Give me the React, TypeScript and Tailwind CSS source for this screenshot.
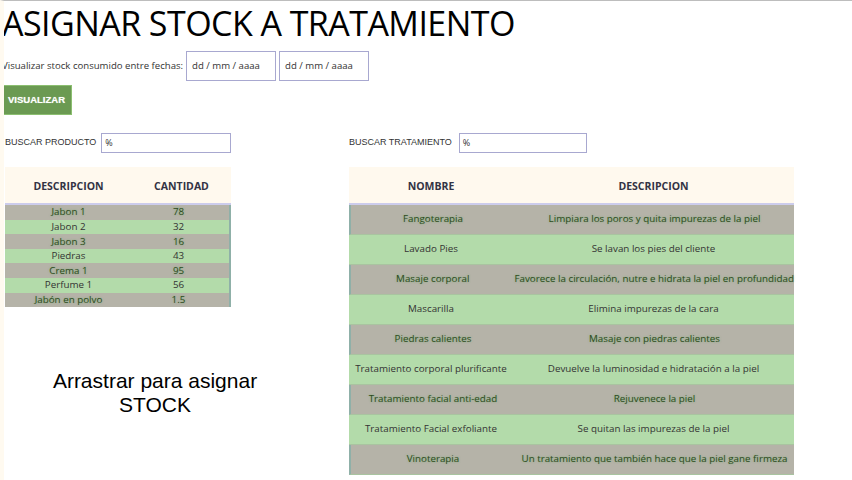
import React from "react";

/*
| Asignar stock a tratamiento
*/
const productos = [
    {desc: "Jabon 1", cant: "78"},
    {desc: "Jabon 2", cant: "32"},
    {desc: "Jabon 3", cant: "16"},
    {desc: "Piedras", cant: "43"},
    {desc: "Crema 1", cant: "95"},
    {desc: "Perfume 1", cant: "56"},
    {desc: "Jabón en polvo", cant: "1.5"},
];

const tratamientos = [
    {nombre: "Fangoterapia", desc: "Limpiara los poros y quita impurezas de la piel"},
    {nombre: "Lavado Pies", desc: "Se lavan los pies del cliente"},
    {nombre: "Masaje corporal", desc: "Favorece la circulación, nutre e hidrata la piel en profundidad"},
    {nombre: "Mascarilla", desc: "Elimina impurezas de la cara"},
    {nombre: "Piedras calientes", desc: "Masaje con piedras calientes"},
    {nombre: "Tratamiento corporal plurificante", desc: "Devuelve la luminosidad e hidratación a la piel"},
    {nombre: "Tratamiento facial anti-edad", desc: "Rejuvenece la piel"},
    {nombre: "Tratamiento Facial exfoliante", desc: "Se quitan las impurezas de la piel"},
    {nombre: "Vinoterapia", desc: "Un tratamiento que también hace que la piel gane firmeza"},
];

const sans = "font-['Open_Sans',sans-serif]";
const arial = "font-['Liberation_Sans',Arial,sans-serif]";

function rowClass(i: number) {
    return i % 2 === 0
        ? "bg-[#b5b3a8] text-[#2f4a1e] [text-shadow:0_0_2px_rgba(90,170,90,0.7)]"
        : "bg-[#b3dbaa] text-[#333]";
}

export default function App() {
    return (
        <div className={`w-[852px] h-[480px] overflow-hidden bg-white border-t border-[#bdbdbd] border-l-[4px] border-l-[#fffaf0] ${sans}`}>

            {/* TITLE */}
            <h1 className="text-[34px] leading-[42px] text-black -ml-[2px] mt-[1px] tracking-[-0.55px] whitespace-nowrap">
                ASIGNAR STOCK A TRATAMIENTO
            </h1>

            {/* FECHAS */}
            <div className="flex items-center -ml-[2px] mt-[7px]">
                <span className="text-[9.6px] text-[#333] whitespace-nowrap">Visualizar stock consumido entre fechas:</span>
                <div className="ml-[3px] w-[90px] h-[30px] border border-[#a8a8d0] flex items-center pl-[5px] text-[9.6px] text-[#333]">
                    dd / mm / aaaa
                </div>
                <div className="ml-[3px] w-[90px] h-[30px] border border-[#a8a8d0] flex items-center pl-[5px] text-[9.6px] text-[#333]">
                    dd / mm / aaaa
                </div>
            </div>

            <button
                className={`mt-[4px] -ml-[3px] w-[71px] h-[30px] bg-[#6b9a52] border border-[#8cbf70] text-white text-[9.5px] font-bold [text-shadow:0_0_1px_rgba(255,255,255,0.6)] ${arial}`}>
                VISUALIZAR
            </button>

            {/* TABLES */}
            <div className="flex mt-[18px]">

                {/* PRODUCTOS */}
                <div className="w-[300px] ml-[1px] flex flex-col">
                    <div className="flex items-center h-[20px]">
                        <span className={`text-[9px] text-[#333] whitespace-nowrap ${arial}`}>BUSCAR PRODUCTO</span>
                        <div className="ml-[5px] w-[130px] h-[20px] border border-[#a8a8d0] text-[9px] pl-[3px] flex items-center text-[#333]">%</div>
                    </div>

                    <div className="mt-[14px] w-[226px]">
                        <div className="h-[38px] pt-[3px] bg-[#fff9ee] flex items-center text-[10.5px] font-bold text-[#333344] border-b-2 border-[#ccccec]">
                            <div className="w-[127px] text-center">DESCRIPCION</div>
                            <div className="flex-1 text-center">CANTIDAD</div>
                        </div>
                        {productos.map((p, i) => (
                            <div key={p.desc}
                                 className={`h-[14.6px] flex items-center text-[9.8px] leading-none border-r-2 border-r-[#8fb0a8] ${rowClass(i)}`}>
                                <div className="w-[127px] text-center">{p.desc}</div>
                                <div className="flex-1 text-center pr-[4px]">{p.cant}</div>
                            </div>
                        ))}
                    </div>

                    <div className={`mt-[62px] text-center text-[21px] leading-[24px] text-black ${arial}`}>
                        Arrastrar para asignar<br/>STOCK
                    </div>
                </div>

                {/* TRATAMIENTOS */}
                <div className="ml-[44px] w-[445px] flex flex-col">
                    <div className="flex items-center h-[20px]">
                        <span className={`text-[9px] text-[#333] whitespace-nowrap ${arial}`}>BUSCAR TRATAMIENTO</span>
                        <div className="ml-[7px] w-[128px] h-[20px] border border-[#a8a8d0] text-[9px] pl-[3px] flex items-center text-[#333]">%</div>
                    </div>

                    <div className="mt-[14px]">
                        <div className="h-[38px] pt-[3px] bg-[#fff9ee] flex items-center text-[10.5px] font-bold text-[#333344] border-b-2 border-[#ccccec]">
                            <div className="w-[164px] text-center">NOMBRE</div>
                            <div className="flex-1 text-center">DESCRIPCION</div>
                        </div>
                        {tratamientos.map((t, i) => (
                            <div key={t.nombre}
                                 className={`h-[30px] flex items-center text-[9.8px] whitespace-nowrap border-b border-[#a9c4a0] ${i % 2 === 0 ? "border-l-2 border-l-[#8fb0a8]" : ""} ${rowClass(i)}`}>
                                <div className="w-[164px] text-center">{t.nombre}</div>
                                <div className="flex-1 text-center">{t.desc}</div>
                            </div>
                        ))}
                    </div>
                </div>

            </div>
        </div>
    );
}
